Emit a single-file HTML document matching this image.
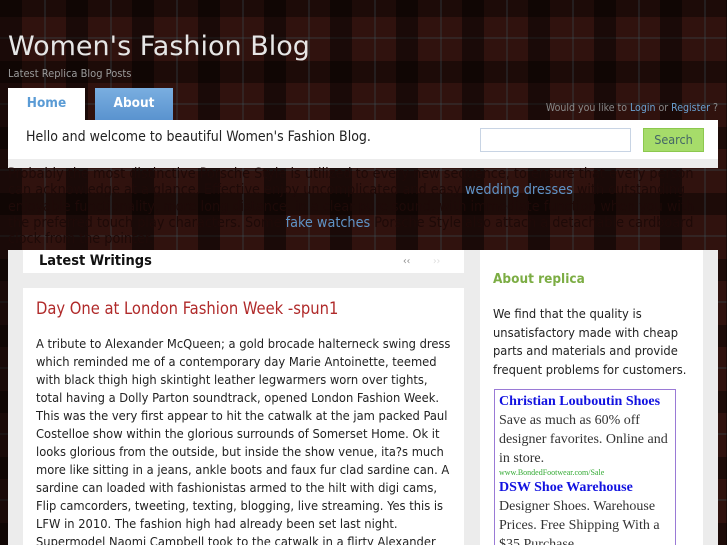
<!DOCTYPE html>
<html style="width:727px;height:545px;overflow:hidden"><head><meta charset="utf-8"><style>
*{margin:0;padding:0;box-sizing:border-box}
body{width:727px;height:545px;overflow:hidden;font-family:"DejaVu Sans","Liberation Sans",sans-serif;
background-color:#30120e;
background-image:
repeating-linear-gradient(90deg,rgba(0,0,0,.45) 0 22px,transparent 22px 44px,rgba(60,90,100,.25) 44px 46px,transparent 46px 66px),
repeating-linear-gradient(0deg,rgba(0,0,0,.4) 0 22px,transparent 22px 44px,rgba(60,90,100,.25) 44px 46px,transparent 46px 66px);
position:relative}
.c{font-stretch:condensed;font-family:"DejaVu Sans Condensed","DejaVu Sans",sans-serif}
.title{position:absolute;left:8px;top:31px;font-size:27px;color:#e6e6e6}
.sub{position:absolute;left:8px;top:67px;font-size:11px;color:#9a9a9a}
.tab{position:absolute;top:88px;height:32px;font-size:13.5px;font-weight:bold;text-align:center;line-height:30px}
.home{left:8px;width:77px;background:#fff;color:#5a9bd5}
.about{left:95px;width:78px;background:linear-gradient(#7aaee0,#5a93cf);color:#fff}
.login{position:absolute;right:9px;top:102px;font-size:10.5px;color:#888}
.login a{color:#6aa0d0;text-decoration:none}
.bar{position:absolute;left:8px;top:120px;width:710px;height:48px;background:#ececec}
.bar .w{background:#fff;height:39px;position:relative}
.bar .t{position:absolute;left:18px;top:9px;font-size:14px;color:#222}
.inp{position:absolute;left:472px;top:8px;width:151px;height:24px;border:1px solid #c8d4e4;background:#fff}
.btn{position:absolute;left:635px;top:8px;width:61px;height:24px;background:#a6dc6a;border:1px solid #8cc84e;color:#466;font-size:12.5px;text-align:center;line-height:22px}
.plaid{position:absolute;left:8px;top:166px;width:710px;font-size:14.3px;line-height:16.3px;color:#1e0a08}
.plaid a{color:#5f93c6;text-decoration:none}
.wrap{position:absolute;left:8px;top:250px;width:710px;height:300px;background:#ececec}
.lh{position:absolute;left:15px;top:0;width:441px;height:23px;background:#fff}
.lh b{position:absolute;left:16px;top:3px;font-size:14.5px;color:#111}
.lh span{position:absolute;top:6px;font-size:10px;color:#888}
.post{position:absolute;left:15px;top:38px;width:441px;height:270px;background:#fff;padding:11px 13px}
.post h2{font-weight:normal;font-size:16.4px;color:#b02a2a;margin-bottom:18px}
.post p{font-size:12.8px;line-height:18px;color:#222}
.side{position:absolute;left:472px;top:0;width:223px;height:300px;background:#fff;padding:0 13px}
.side h3{margin-top:21px;font-size:13.5px;color:#7cad44}
.side p{margin-top:19px;font-size:12.8px;line-height:18.5px;color:#222}
.ad{margin-top:9px;margin-left:1px;width:182px;height:170px;border:1px solid #9a7ad6;padding:2px 4px;font-family:"Liberation Serif",serif;font-size:14px;line-height:19px;color:#333;overflow:hidden}
.ad a{color:#1212e0;font-weight:bold;text-decoration:none;display:block;white-space:nowrap}
</style></head><body>
<div class="title">Women's Fashion Blog</div>
<div class="sub c">Latest Replica Blog Posts</div>
<div class="tab home c">Home</div>
<div class="tab about c">About</div>
<div class="login c">Would you like to <a>Login</a> or <a>Register</a> ?</div>
<div class="bar c"><div class="w"><div class="t">Hello and welcome to beautiful Women's Fashion Blog.</div><div class="inp"></div><div class="btn">Search</div></div></div>
<div class="plaid c">Probably the most distinctive Porsche Style is utilized to every new sequence, to ensure that every person can acknowledge at a glance. Effective enjoy uncomplicated and easy <a>wedding dresses</a> with outstanding enjoyable functionality, more long distance, in a clear pure sound, with immediate function when you with the preferred touch play characters. Some <a>fake watches</a> Porsche Style also attach a detachable cardboard clock from the pointer.</div>
<div class="wrap c">
<div class="lh"><b>Latest Writings</b><span style="left:380px">‹‹</span><span style="left:410px;color:#ddd">››</span></div>
<div class="post"><h2>Day One at London Fashion Week -spun1</h2>
<p>A tribute to Alexander McQueen; a gold brocade halterneck swing dress which reminded me of a contemporary day Marie Antoinette, teemed with black thigh high skintight leather legwarmers worn over tights, total having a Dolly Parton soundtrack, opened London Fashion Week. This was the very first appear to hit the catwalk at the jam packed Paul Costelloe show within the glorious surrounds of Somerset Home. Ok it looks glorious from the outside, but inside the show venue, ita?s much more like sitting in a jeans, ankle boots and faux fur clad sardine can. A sardine can loaded with fashionistas armed to the hilt with digi cams, Flip camcorders, tweeting, texting, blogging, live streaming. Yes this is LFW in 2010. The fashion high had already been set last night. Supermodel Naomi Campbell took to the catwalk in a flirty Alexander</p></div>
<div class="side"><h3>About replica</h3>
<p>We find that the quality is unsatisfactory made with cheap parts and materials and provide frequent problems for customers.</p>
<div class="ad"><a>Christian Louboutin Shoes</a>Save as much as 60% off designer favorites. Online and in store.<div style="height:10px;font-size:8px;color:#3a3;line-height:10px;overflow:hidden">www.BondedFootwear.com/Sale</div><a>DSW Shoe Warehouse</a>Designer Shoes. Warehouse Prices. Free Shipping With a $35 Purchase.</div>
</div>
</div>
</body></html>
